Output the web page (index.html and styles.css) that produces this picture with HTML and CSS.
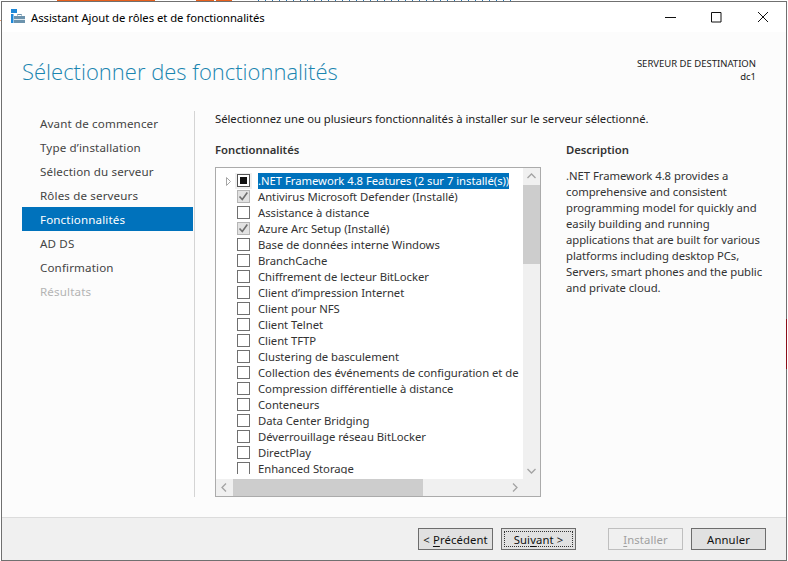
FILE: index.html
```html
<!DOCTYPE html>
<html lang="fr">
<head>
<meta charset="utf-8">
<title>Assistant Ajout de rôles et de fonctionnalités</title>
<link rel="stylesheet" href="styles.css">
</head>
<body>
<div class="peek peek-a"></div>
<div class="peek peek-b"></div>
<div class="peek peek-c"></div>
<div class="peek peek-d"></div>
<div class="peek peek-e"></div>
<div class="peek peek-f"></div>
<div class="window">
  <div class="titlebar">
    <svg class="appicon" width="16" height="16" viewBox="0 0 16 16"><path fill="#1e88d8" d="M0 0h6v4H0zM0 5h2.500v9H0z"/><path fill="#6c93ad" d="M3 7h11v7H3z"/><path fill="none" stroke="#6c93ad" d="M6.500 6.500v-1h4v1"/><path stroke="#dfe8ee" d="M3 10.500h11"/></svg>
    <span class="wintitle">Assistant Ajout de rôles et de fonctionnalités</span>
    <div class="caption">
      <svg width="12" height="12" viewBox="0 0 12 12"><path stroke="#111" d="M0 6.500h11"/></svg>
      <svg width="12" height="12" viewBox="0 0 12 12"><path fill="none" stroke="#111" d="M.5 1.500h9.500v9.500H.5z"/></svg>
      <svg width="12" height="12" viewBox="0 0 12 12"><path fill="none" stroke="#111" d="M1 1l10 10M11 1L1 11"/></svg>
    </div>
  </div>
  <div class="content">
    <header class="header">
      <h1>Sélectionner des fonctionnalités</h1>
      <div class="dest"><div class="dest-label">SERVEUR DE DESTINATION</div><div>dc1</div></div>
    </header>
    <div class="columns">
      <nav class="nav">
        <div class="nav-item">Avant de commencer</div>
        <div class="nav-item">Type d’installation</div>
        <div class="nav-item">Sélection du serveur</div>
        <div class="nav-item">Rôles de serveurs</div>
        <div class="nav-item active">Fonctionnalités</div>
        <div class="nav-item">AD DS</div>
        <div class="nav-item">Confirmation</div>
        <div class="nav-item disabled">Résultats</div>
      </nav>
      <main class="main">
        <p class="intro">Sélectionnez une ou plusieurs fonctionnalités à installer sur le serveur sélectionné.</p>
        <div class="panes">
          <section class="features">
            <h2>Fonctionnalités</h2>
            <div class="listbox">
              <div class="list">
                <div class="rows">
                  <div class="row"><svg class="arrow" width="7" height="9" viewBox="0 0 7 9"><path fill="#fff" stroke="#a6a6a6" d="M1.500.5l4 4-4 4z"/></svg><span class="cb partial"></span><span class="label selected">.NET Framework 4.8 Features (2 sur 7 installé(s))</span></div>
                  <div class="row"><span class="cb checked"><svg width="11" height="11" viewBox="0 0 11 11"><path fill="none" stroke="#6e6e6e" stroke-width="1.600" d="M1.500 5.500l2.800 3 5-7"/></svg></span><span class="label">Antivirus Microsoft Defender (Installé)</span></div>
                  <div class="row"><span class="cb"></span><span class="label">Assistance à distance</span></div>
                  <div class="row"><span class="cb checked"><svg width="11" height="11" viewBox="0 0 11 11"><path fill="none" stroke="#6e6e6e" stroke-width="1.600" d="M1.500 5.500l2.800 3 5-7"/></svg></span><span class="label">Azure Arc Setup (Installé)</span></div>
                  <div class="row"><span class="cb"></span><span class="label">Base de données interne Windows</span></div>
                  <div class="row"><span class="cb"></span><span class="label">BranchCache</span></div>
                  <div class="row"><span class="cb"></span><span class="label">Chiffrement de lecteur BitLocker</span></div>
                  <div class="row"><span class="cb"></span><span class="label">Client d’impression Internet</span></div>
                  <div class="row"><span class="cb"></span><span class="label">Client pour NFS</span></div>
                  <div class="row"><span class="cb"></span><span class="label">Client Telnet</span></div>
                  <div class="row"><span class="cb"></span><span class="label">Client TFTP</span></div>
                  <div class="row"><span class="cb"></span><span class="label">Clustering de basculement</span></div>
                  <div class="row"><span class="cb"></span><span class="label">Collection des événements de configuration et de démarrage</span></div>
                  <div class="row"><span class="cb"></span><span class="label">Compression différentielle à distance</span></div>
                  <div class="row"><span class="cb"></span><span class="label">Conteneurs</span></div>
                  <div class="row"><span class="cb"></span><span class="label">Data Center Bridging</span></div>
                  <div class="row"><span class="cb"></span><span class="label">Déverrouillage réseau BitLocker</span></div>
                  <div class="row"><span class="cb"></span><span class="label">DirectPlay</span></div>
                  <div class="row"><span class="cb"></span><span class="label">Enhanced Storage</span></div>
                </div>
              </div>
              <div class="vscroll">
                <svg class="sb-btn" width="17" height="17" viewBox="0 0 17 17"><path fill="none" stroke="#a3a3a3" stroke-width="1.300" d="M4.500 10l4-4 4 4"/></svg>
                <div class="vthumb"></div>
                <div class="grow"></div>
                <svg class="sb-btn" width="17" height="17" viewBox="0 0 17 17"><path fill="none" stroke="#a3a3a3" stroke-width="1.300" d="M4.500 7l4 4 4-4"/></svg>
              </div>
              <div class="hscroll">
                <svg class="sb-btn" width="17" height="17" viewBox="0 0 17 17"><path fill="none" stroke="#a3a3a3" stroke-width="1.300" d="M10 4.500l-4 4 4 4"/></svg>
                <div class="hthumb"></div>
                <div class="grow"></div>
                <svg class="sb-btn" width="17" height="17" viewBox="0 0 17 17"><path fill="none" stroke="#a3a3a3" stroke-width="1.300" d="M7 4.500l4 4-4 4"/></svg>
              </div>
              <div class="corner"></div>
            </div>
          </section>
          <aside class="description">
            <h2>Description</h2>
            <p>.NET Framework 4.8 provides a comprehensive and consistent programming model for quickly and easily building and running applications that are built for various platforms including desktop PCs, Servers, smart phones and the public and private cloud.</p>
          </aside>
        </div>
      </main>
    </div>
  </div>
  <footer class="footer">
    <button class="btn">&lt; <u>P</u>récédent</button>
    <button class="btn default"><span class="focus"><span>Sui<u>v</u>ant &gt;</span></span></button>
    <button class="btn off"><u>I</u>nstaller</button>
    <button class="btn">Annuler</button>
  </footer>
</div>
</body>
</html>
```
FILE: styles.css
```css
* { box-sizing: border-box; }
html, body { margin: 0; padding: 0; }
body {
  position: relative;
  width: 788px;
  height: 561px;
  overflow: hidden;
  background: #fff;
  font-family: "Noto Sans", "Open Sans", sans-serif;
  font-size: 11.300px;
  letter-spacing: -.04px;
  color: #222;
}
.peek { position: absolute; }
.peek-a { left: 57px; top: 0; width: 98px; height: 1px; background: #e8601c; }
.peek-b { left: 196px; top: 0; width: 18px; height: 1px; background: #e8601c; }
.peek-c { left: 216px; top: 0; width: 16px; height: 1px; background: #e8601c; }
.peek-d { left: 786px; top: 319px; width: 1px; height: 50px; background: #8c0f1a; z-index: 2; }
.peek-e { left: 258px; top: 0; width: 256px; height: 1px; background: repeating-linear-gradient(90deg, #2a7ab8 0 1px, #fff 1px 7px); }
.peek-f { left: 0; top: 20px; width: 1px; height: 1px; background: #e8a070; }

.window {
  display: flex;
  flex-direction: column;
  width: 786px;
  height: 560px;
  margin: 1px 0 0 1px;
  border: 1px solid #707070;
  background: #fcfcfc;
}
.titlebar {
  display: flex;
  align-items: center;
  height: 30px;
  padding-left: 9px;
  background: #fff;
  flex: none;
}
.appicon { flex: none; }
.wintitle { margin-left: 4px; color: #000; }
.caption {
  display: flex;
  gap: 34px;
  margin-left: auto;
  padding-right: 17px;
}
.content { display: flex; flex-direction: column; flex: 1; min-height: 0; padding-left: 20px; }
.header {
  display: flex;
  justify-content: space-between;
  align-items: flex-start;
  height: 79px;
  padding-right: 30px;
}
h1 {
  margin: 20px 0 0;
  font-family: "Open Sans", sans-serif;
  font-weight: 300;
  font-size: 22px;
  letter-spacing: 0;
  line-height: 38px;
  color: #1a85b0;
}
.dest { margin-top: 25px; text-align: right; font-size: 9.500px; letter-spacing: 0; line-height: 13px; color: #222; }
.columns { display: flex; flex: 1; min-height: 0; }
.nav {
  width: 173px;
  height: 386px;
  border-right: 1px solid #d4d4d4;
  flex: none;
}
.nav-item { height: 24px; line-height: 26px; padding-left: 18px; font-size: 11.600px; letter-spacing: .14px; color: #444; }
.nav-item.active { background: #0072bc; color: #fff; width: 171px; }
.nav-item.disabled { color: #b4b4b4; }
.main { flex: 1; min-width: 0; padding-left: 20px; }
.intro { margin: 0; height: 24px; line-height: 16px; color: #222; }
.panes { display: flex; gap: 25px; margin-top: 6px; }
.features { width: 326px; flex: none; }
h2 { margin: 0; font-size: 11.300px; font-weight: 600; line-height: 18px; color: #333; }
.listbox {
  display: grid;
  grid-template-columns: 307px 17px;
  grid-template-rows: 311px 17px;
  width: 326px;
  height: 330px;
  margin-top: 8px;
  border: 1px solid #ababab;
  background: #fff;
}
.list { overflow: hidden; padding-top: 5px; }
.rows { width: 305px; height: 301px; overflow: hidden; }
.row {
  position: relative;
  display: flex;
  align-items: center;
  height: 16px;
  padding-left: 21px;
  white-space: nowrap;
  color: #333;
}
.arrow { position: absolute; left: 9px; top: 4px; }
.cb {
  display: flex;
  align-items: center;
  justify-content: center;
  flex: none;
  width: 13px;
  height: 13px;
  margin: 0 8px 1px 0;
  border: 1px solid #707070;
  background: #fff;
}
.cb.checked { background: #e2e2e2; border-color: #b5b5b5; }
.cb.partial { border-color: #555; box-shadow: 0 0 0 2px #f0f0f0; }
.cb.partial::before { content: ""; width: 7px; height: 7px; background: #111; }
.label { line-height: 16px; }
.label.selected { background: #0072bc; color: #fff; }
.vscroll, .hscroll { display: flex; background: #f0f0f0; }
.vscroll { flex-direction: column; }
.sb-btn { flex: none; display: block; }
.vthumb { height: 79px; background: #cdcdcd; flex: none; }
.hthumb { width: 190px; background: #cdcdcd; flex: none; }
.grow { flex: 1; }
.corner { background: #f0f0f0; }
.description { flex: none; width: 205px; }
.description p { margin: 9px 0 0; line-height: 16px; color: #333; }
.footer {
  display: flex;
  align-items: flex-start;
  flex: none;
  height: 43px;
  padding: 10px 0 0 416px;
  background: #f0f0f0;
  border-top: 1px solid #dcdcdc;
}
.btn {
  width: 75px;
  height: 22px;
  padding: 0;
  margin-right: 8px;
  border: 1px solid #6d6d6d;
  background: #e1e1e1;
  font: inherit;
  letter-spacing: .1px;
  color: #111;
  border-radius: 0;
}
.btn u { text-underline-offset: 2px; }
.btn.default { margin-right: 32px; padding: 2px; }
.focus { display: flex; align-items: center; justify-content: center; width: 100%; height: 100%; border: 1px dotted #333; }
.btn.off { background: #f0f0f0; border-color: #bfbfbf; color: #a0a0a0; }
```
